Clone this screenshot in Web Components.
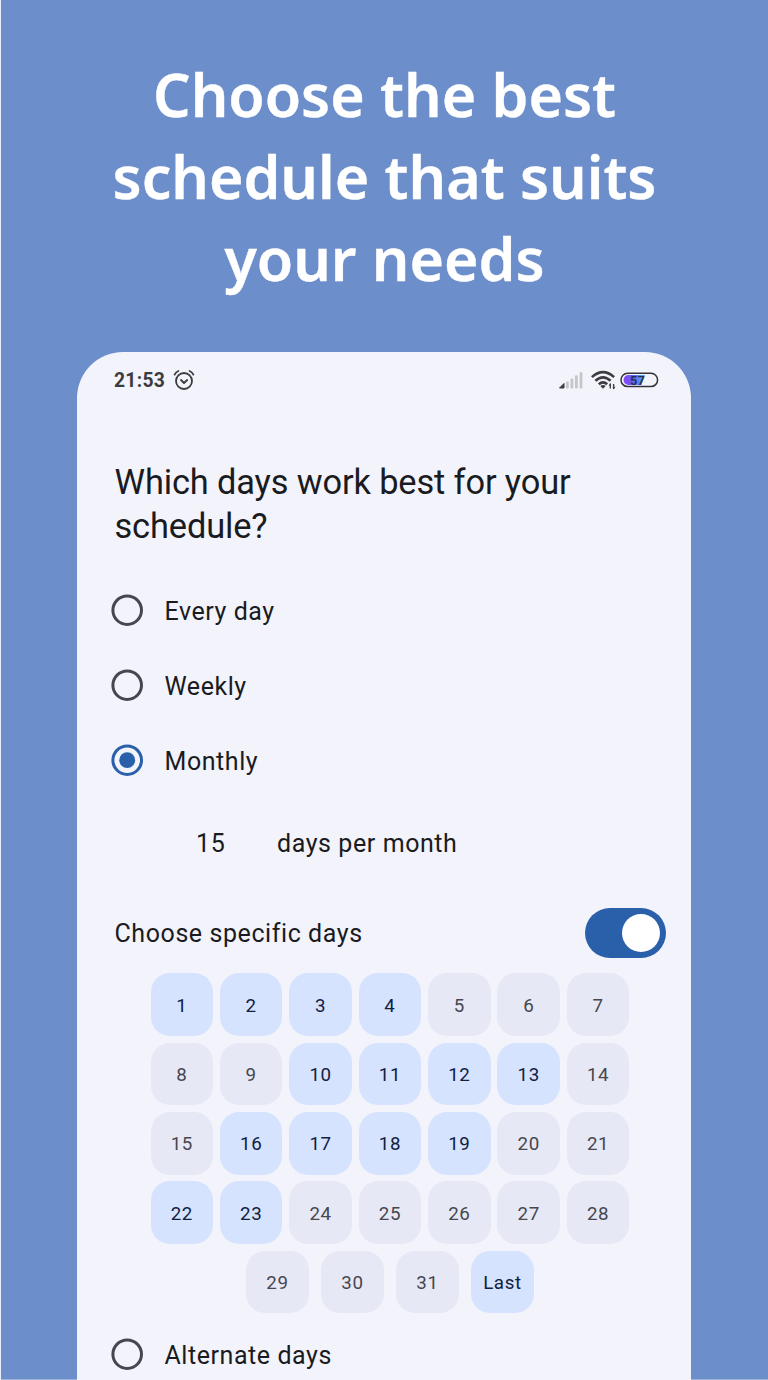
<!DOCTYPE html>
<html lang="en">
<head>
<meta charset="utf-8">
<title>Schedule</title>
<style>
html, body { margin: 0; }
body { width: 768px; height: 1380px; overflow: hidden; background: #6c8ecb; font-family: Roboto, sans-serif; }
</style>
</head>
<body>
<promo-page>
  <promo-heading slot="heading">
    <span>Choose the best</span>
    <span>schedule that suits</span>
    <span>your needs</span>
  </promo-heading>
  <phone-frame>
    <status-bar time="21:53" level="57"></status-bar>
    <page-title>Which days work best for your<br>schedule?</page-title>
    <radio-option>Every day</radio-option>
    <radio-option>Weekly</radio-option>
    <radio-option checked>Monthly</radio-option>
    <day-count value="15">days per month</day-count>
    <toggle-row>Choose specific days</toggle-row>
    <day-grid selected="1 2 3 4 10 11 12 13 16 17 18 19 22 23 Last"></day-grid>
    <radio-option>Alternate days</radio-option>
  </phone-frame>
</promo-page>
<script>
const define = (name, html, setup) => customElements.define(name, class extends HTMLElement {
  constructor() {
    super();
    this.attachShadow({ mode: 'open' }).innerHTML = html;
  }
  connectedCallback() { if (setup) setup(this, this.shadowRoot); }
});

define('promo-page', `<style>
:host { display: flex; flex-direction: column; align-items: flex-start; box-sizing: border-box; width: 768px; height: 1380px;
  border-left: 1px solid #e9eef8; overflow: hidden; background: linear-gradient(#9db4dc, #9db4dc) 0 100% / 100% 1px no-repeat #6c8ecb; }
.head { flex: none; width: 767px; height: 352px; box-sizing: border-box; padding-top: 53px; }
</style><div class="head"><slot name="heading"></slot></div><slot></slot>`);

define('promo-heading', `<style>
:host { display: flex; flex-direction: column; align-items: center; color: #fff;
  font: 600 59px/82px "Noto Sans", sans-serif; -webkit-text-stroke: .4px #fff; }
::slotted(span) { white-space: nowrap; }
</style><slot></slot>`);

define('phone-frame', `<style>
:host { display: block; box-sizing: border-box; margin-left: 76px; width: 613.5px; height: 1040px; flex: none;
  border-radius: 46px 46px 0 0; background: #f3f3fc; color: #1a1b20; overflow: hidden; }
</style><slot></slot>`);

define('status-bar', `<style>
:host { display: flex; align-items: center; height: 57px; box-sizing: border-box; padding: 0 32px 1px 37px; color: #3c3c40; }
.time { font: 700 19.3px/24px Roboto, sans-serif; letter-spacing: .3px; width: 59px; padding-top: 2px; }
.alarm { flex: 1; display: flex; }
svg { display: block; flex: none; }
.signal { margin-right: 8px; } .wifi { margin-right: 4px; }
</style>
<span class="time"></span>
<span class="alarm"><svg width="22" height="22" viewBox="0 0 22 22" fill="none" stroke="#3c3c40" stroke-width="1.8" stroke-linecap="round" stroke-linejoin="round"><circle cx="11" cy="12" r="8"/><path d="M8 11l3 3 3.2-3M1.6 5.6Q2.8 3.2 5.4 2M20.4 5.6Q19.2 3.2 16.6 2"/></svg></span>
<svg class="signal" width="24" height="18" viewBox="0 0 24 18"><path d="M0.5 17L5 12.5V17z" fill="#3c3c40" stroke="#3c3c40" stroke-linejoin="round"/><g fill="#c6c6ca"><rect x="7" y="10.5" width="2.8" height="7" rx="1"/><rect x="11.5" y="7.5" width="2.8" height="10" rx="1"/><rect x="16" y="4.2" width="2.8" height="13.3" rx="1"/><rect x="20.6" y="1" width="2.8" height="16.5" rx="1"/></g></svg>
<svg class="wifi" width="25" height="20" viewBox="0 0 25 20" fill="none" stroke="#3c3c40" stroke-width="2.6"><path d="M.9 7.1Q12 -3 23.100 7.100M4.400 10.800Q12 4 19.600 10.800M7.800 14.200Q12 10.400 16.200 14.200"/><path d="M9.300 16Q12 14 14.700 16L12 18.800z" fill="#3c3c40" stroke="none"/><path d="M19.300 13.500v5M22.600 14v5" stroke-width="1.300"/><path d="M17.600 15.800L19.300 13.200 20.200 15.800zM21.700 16.800L22.600 19.400 24.400 16.800z" fill="#3c3c40" stroke="none"/></svg>
<svg class="battery" width="39" height="16" viewBox="0 0 39 16"><defs><linearGradient id="g"><stop offset="0" stop-color="#8b45f7"/><stop offset=".4" stop-color="#655cf7"/><stop offset="1" stop-color="#48b3f2"/></linearGradient></defs><path d="M8.500 3H25L21.500 13H8.500A5 5 0 0 1 8.500 3z" fill="url(#g)"/><rect x="1" y="1.300" width="36.600" height="13.300" rx="6.650" fill="none" stroke="#343438" stroke-width="1.500"/><text x="17.400" y="12.500" text-anchor="middle" font-family="Roboto, sans-serif" font-weight="600" font-size="12.800" fill="#29304a"></text></svg>`,
(el, root) => {
  root.querySelector('.time').textContent = el.getAttribute('time');
  root.querySelector('text').textContent = el.getAttribute('level');
});

define('page-title', `<style>
:host { display: block; box-sizing: border-box; padding: 51px 0 0 37.500px; height: 164px; font: 400 34.400px/44px Roboto, sans-serif; letter-spacing: -.13px; white-space: nowrap; }
</style><slot></slot>`);

define('radio-option', `<style>
:host { display: flex; align-items: center; height: 75px; margin-left: 34px; font: 400 25px/30px Roboto, sans-serif; letter-spacing: .56px; }
svg { flex: none; margin-right: 20.500px; }
.on { display: none; }
circle { stroke: #46474e; fill: none; stroke-width: 3; }
:host([checked]) circle { stroke: #2a5fa9; }
:host([checked]) .on { display: block; fill: #2a5fa9; stroke: none; }
span { padding-top: 3px; }
</style><svg width="33" height="33" viewBox="0 0 33 33"><circle cx="16.200" cy="16.200" r="14.300"/><circle class="on" cx="16.200" cy="16.200" r="7.900"/></svg><span><slot></slot></span>`);

define('day-count', `<style>
:host { display: flex; align-items: center; height: 90px; padding-top: 2px; box-sizing: border-box; font: 400 25px/30px Roboto, sans-serif; letter-spacing: .58px; }
b { font-weight: 400; width: 81px; margin-left: 119px; }
</style><b></b><slot></slot>`, (el, root) => { root.querySelector('b').textContent = el.getAttribute('value'); });

define('toggle-row', `<style>
:host { display: flex; align-items: center; justify-content: space-between; height: 89px; padding: 0 24.500px 0 37.500px; font: 400 25px/30px Roboto, sans-serif; letter-spacing: .58px; }
span { padding-top: 3px; }
i { display: flex; justify-content: flex-end; align-items: center; width: 81.500px; height: 50px; box-sizing: border-box; padding-right: 6px; border-radius: 25px; background: #2a5fa9; }
i::after { content: ""; width: 38px; height: 38px; border-radius: 50%; background: #fff; }
</style><span><slot></slot></span><i></i>`);

define('day-cell', `<style>
:host { display: flex; align-items: center; justify-content: center; width: 62.500px; height: 62.500px; border-radius: 19px; background: #e7e8f5; color: #46474f;
  font: 400 18.750px/24px Roboto, sans-serif; letter-spacing: .6px; box-sizing: border-box; padding-top: 2px; }
:host([on]) { background: #d5e3ff; color: #10213f; }
</style><slot></slot>`);

define('day-grid', `<style>
:host { display: flex; flex-direction: column; align-items: center; gap: 6.900px; margin-top: -3.700px; padding: 0 0 4px 12.400px; }
.grid { display: grid; grid-template-columns: repeat(7, 62.500px); gap: 6.900px; }
.row { display: flex; gap: 12.500px; }
</style><div class="grid"></div><div class="row"></div>`, (el, root) => {
  const selected = el.getAttribute('selected').split(' ');
  const days = [...Array(31).keys()].map(i => String(i + 1)).concat('Last');
  days.forEach((day, i) => {
    const cell = document.createElement('day-cell');
    cell.textContent = day;
    cell.toggleAttribute('on', selected.includes(day));
    root.querySelector(i < 28 ? '.grid' : '.row').append(cell);
  });
});
</script>
</body>
</html>
